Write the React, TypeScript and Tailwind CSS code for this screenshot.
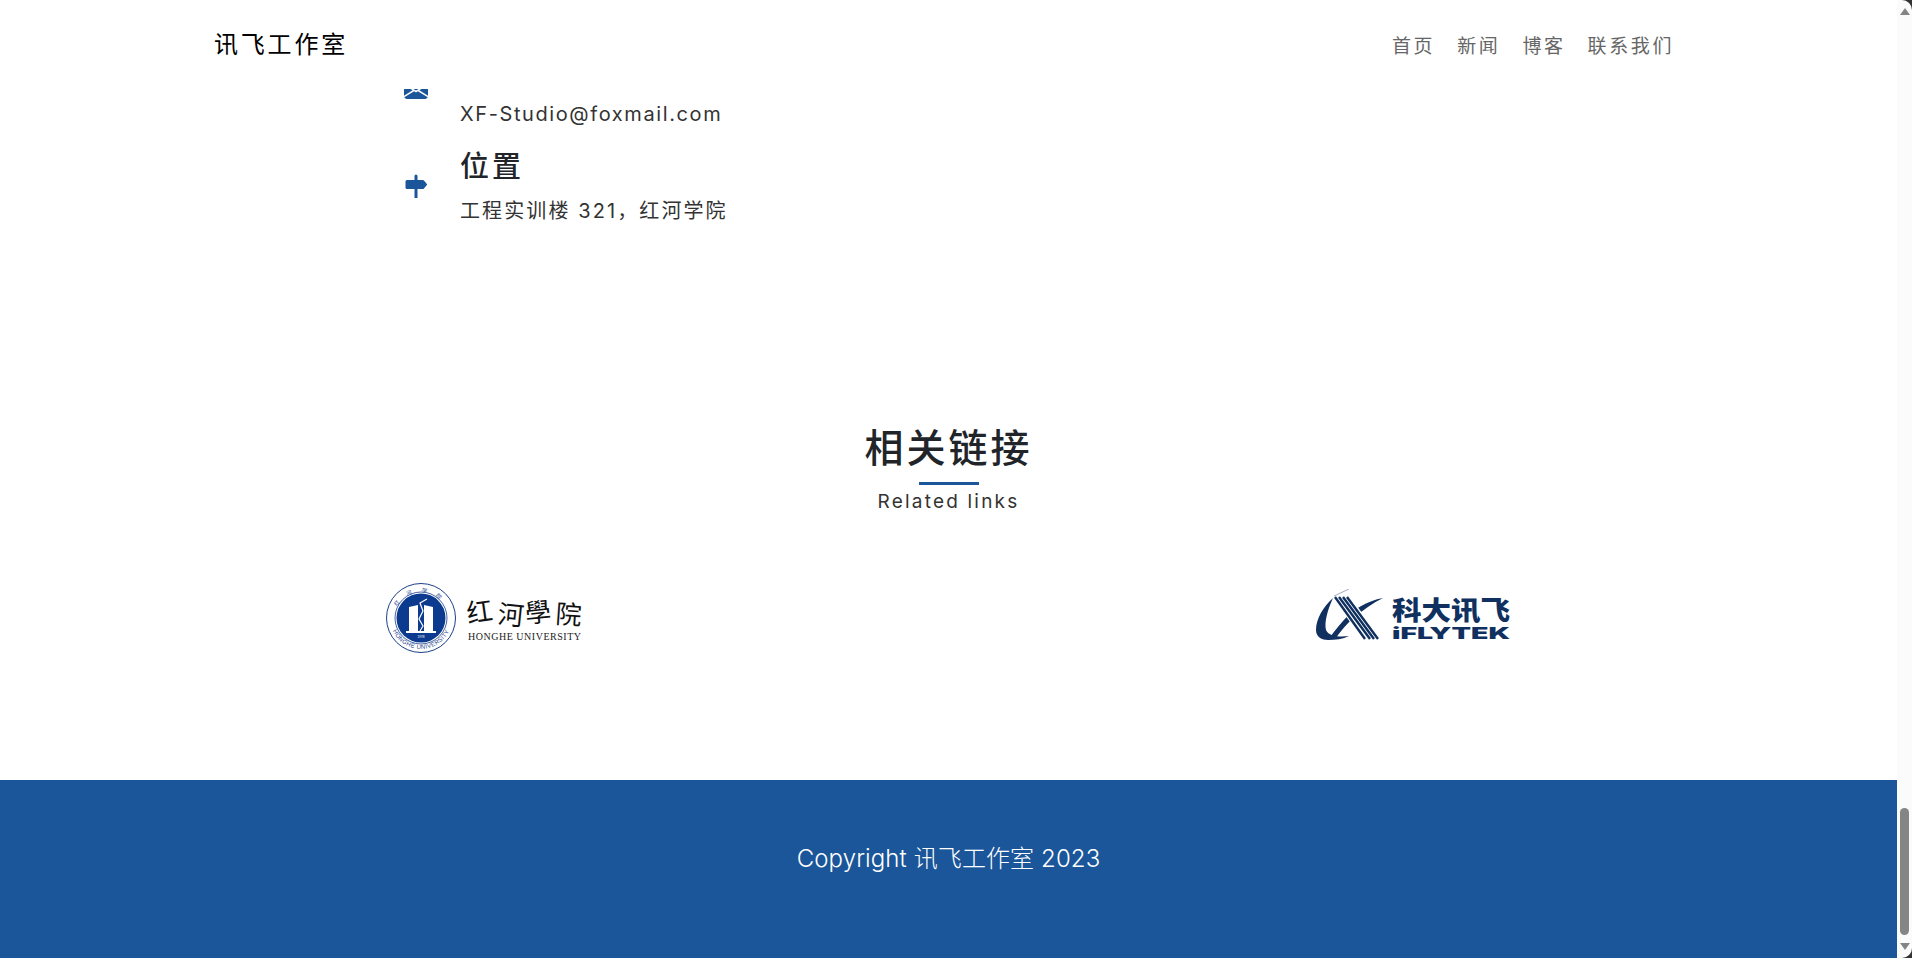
import React from "react";
import { BsEnvelopeFill, BsSignpostFill } from "react-icons/bs";

const cjk = "font-['Inter','Noto_Sans_CJK_SC',sans-serif]";

const navItems = ["首页", "新闻", "博客", "联系我们"];

// seal + calligraphy wordmark
const HongheLogo = () => (
  <svg width="200" height="80" viewBox="0 0 200 80" aria-label="红河学院">
    <circle cx="37" cy="39" r="34.5" fill="#fff" stroke="#1b3f8b" strokeWidth="1" />
    <circle cx="37" cy="39" r="24.5" fill="#0c3a8e" />
    <circle cx="37" cy="39" r="26" fill="none" stroke="#1b3f8b" strokeWidth="0.8" />
    <defs>
      <path id="sealBottom" d="M6 39 A31 31 0 0 0 68 39" />
      <path id="sealTop" d="M10 36 A27.5 27.5 0 0 1 64 36" />
    </defs>
    <text fontSize="6" fill="#1b3f8b" fontFamily="Liberation Sans, sans-serif" letterSpacing="0.4">
      <textPath href="#sealBottom" startOffset="50%" textAnchor="middle">
        HONGHE UNIVERSITY
      </textPath>
    </text>
    <text fontSize="5.5" fill="#1b3f8b" fontFamily="Noto Sans CJK SC, sans-serif" letterSpacing="9">
      <textPath href="#sealTop" startOffset="50%" textAnchor="middle">
        红河学院
      </textPath>
    </text>
    <path d="M25 28 L34 26 L34 52 L25 52 Z" fill="#fff" />
    <path d="M40 26 L49 28 L49 52 L40 52 Z" fill="#fff" />
    <path d="M43 20 L36 24 L39 32 L35 40 L39 47 L36 52" fill="none" stroke="#fff" strokeWidth="1.2" />
    <rect x="22" y="52" width="30" height="2" fill="#fff" />
    <text x="37" y="59" fontSize="3.2" fill="#fff" textAnchor="middle" fontFamily="Liberation Sans, sans-serif">
      1978
    </text>
    <text
      x="84"
      y="44"
      fontSize="26"
      rotate="-8 6 -6 4"
      fill="#111"
      fontFamily="Noto Sans CJK TC, sans-serif"
      textLength="113"
    >
      红河學院
    </text>
    <text x="84" y="61" fontSize="10" fill="#222" fontFamily="Liberation Serif, serif" textLength="113">
      HONGHE UNIVERSITY
    </text>
  </svg>
);

const IflytekLogo = () => (
  <svg width="200" height="60" viewBox="0 0 200 60" aria-label="iFLYTEK">
    <path d="M19 9 C9 18 2 30 2 41 C2 48 8 51 14 51 C21 51 29 50 35 47 C27 48 15 48 12 41 C10 33 14 20 19 9 Z" fill="#10305f" />
    <path d="M69 9 C53 12 39 20 29 32 C23 39 18 45 15 50 L21 50 C27 42 33 34 41 28 C49 21 59 14 69 9 Z" fill="#10305f" />
    <path d="M27 8 L58 50" stroke="#fff" strokeWidth="15" fill="none" />
    <path d="M21 8 L51 50 M25 8 L56 50 M29 8 L60 50 M33 8 L64 50" stroke="#10305f" strokeWidth="2.4" fill="none" />
    <path d="M20 7 L35 0" stroke="#8a97ad" strokeWidth="0.8" />
    <text
      x="78"
      y="31"
      fontSize="26"
      fontWeight="900"
      fill="#10305f"
      fontFamily="Noto Sans CJK SC, sans-serif"
      textLength="118"
      lengthAdjust="spacingAndGlyphs"
    >
      科大讯飞
    </text>
    <text
      x="78"
      y="50"
      fontSize="16"
      fontWeight="900"
      fill="#10305f"
      fontFamily="Inter, sans-serif"
      textLength="118"
      lengthAdjust="spacingAndGlyphs"
    >
      iFLYTEK
    </text>
  </svg>
);

const App: React.FC = () => {
  return (
    <div className={`flex h-[958px] w-full overflow-hidden bg-[#333] ${cjk}`}>
      <div className="flex h-full w-[1897px] flex-col bg-white">
        {/* navbar */}
        <header className="flex h-[89px] shrink-0 items-center justify-between pl-[214px] pr-[223px]">
          <span className="text-[24px] tracking-[2.8px] text-black">讯飞工作室</span>
          <nav className="mt-[5px] flex gap-[22px]">
            {navItems.map((item) => (
              <a key={item} className="text-[19px] tracking-[2.6px] text-[#666]">
                {item}
              </a>
            ))}
          </nav>
        </header>

        {/* contact rows */}
        <section className="pl-[404px]">
          <div className="flex h-[41px] gap-[32px]">
            <div className="h-full w-[24px] overflow-hidden">
              <BsEnvelopeFill className="-mt-[11px] h-[24px] w-[24px] text-[#1a5699]" />
            </div>
            <p className="pt-[11px] text-[20px] leading-[28px] tracking-[1.6px] text-[#333]">
              XF-Studio@foxmail.com
            </p>
          </div>
          <div className="mt-[17px] flex items-center gap-[32px]">
            <BsSignpostFill className="h-[24px] w-[24px] text-[#1a5699]" />
            <div>
              <h3 className="text-[29px] font-medium leading-[40px] tracking-[3px] text-[#212529]">位置</h3>
              <p className="mt-[10px] text-[20px] leading-[28px] tracking-[2.1px] text-[#333]">
                工程实训楼 321，红河学院
              </p>
            </div>
          </div>
        </section>

        {/* related links */}
        <section className="mt-[200px] flex flex-col items-center">
          <h2 className="text-[39px] font-medium leading-[46px] tracking-[3px] text-[#212529]">相关链接</h2>
          <div className="mt-[11px] h-[3px] w-[60px] bg-[#1a5699]" />
          <p className="mt-[3px] text-[19px] leading-[28px] tracking-[2.2px] text-[#333]">Related links</p>
        </section>

        <section className="mx-auto mt-[63px] grid w-[1860px] grid-cols-2 justify-items-center">
          <HongheLogo />
          <div className="pt-[10px]">
            <IflytekLogo />
          </div>
        </section>

        {/* footer */}
        <footer className="mt-auto flex h-[178px] shrink-0 items-center justify-center bg-[#1a5699] pb-[20px]">
          <p className="text-[24px] font-light tracking-[0.1px] text-white">Copyright 讯飞工作室 2023</p>
        </footer>
      </div>

      {/* scrollbar */}
      <aside className="flex h-full w-[15px] flex-col items-center rounded-r-[10px] bg-[#fbfbfb] pt-[8px]">
        <div className="h-0 w-0 border-x-[5px] border-b-[7px] border-x-transparent border-b-[#858585]" />
        <div className="mt-auto h-[127px] w-[9px] rounded-full bg-[#858585]" />
        <div className="mb-[8px] mt-[8px] h-0 w-0 border-x-[5px] border-t-[7px] border-x-transparent border-t-[#858585]" />
      </aside>
    </div>
  );
};

export default App;
